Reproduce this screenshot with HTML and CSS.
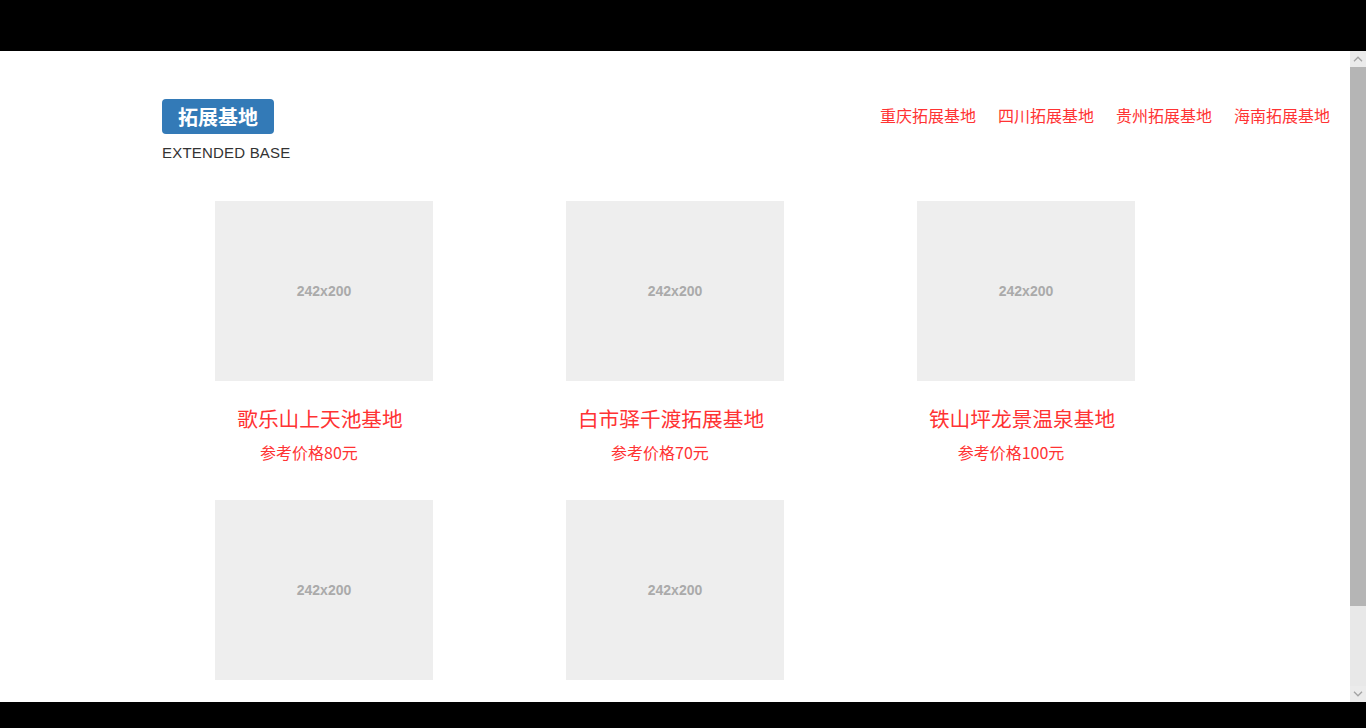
FILE: index.html
```html
<!DOCTYPE html>
<html lang="zh-CN">
<head>
<meta charset="utf-8">
<title>拓展基地</title>
<link rel="stylesheet" href="styles.css">
</head>
<body>
<div class="frame-bar top"></div>
<div class="window">
  <main class="viewport">
    <header class="section-head">
      <div class="brand">
        <span class="badge">拓展基地</span>
        <p class="subtitle">EXTENDED BASE</p>
      </div>
      <nav class="region-nav">
        <a href="#">重庆拓展基地</a>
        <a href="#">四川拓展基地</a>
        <a href="#">贵州拓展基地</a>
        <a href="#">海南拓展基地</a>
      </nav>
    </header>
    <section class="card-grid">
      <article class="card">
        <div class="thumb">242x200</div>
        <h3 class="card-title">歌乐山上天池基地</h3>
        <p class="card-price">参考价格80元</p>
      </article>
      <article class="card">
        <div class="thumb">242x200</div>
        <h3 class="card-title">白市驿千渡拓展基地</h3>
        <p class="card-price">参考价格70元</p>
      </article>
      <article class="card">
        <div class="thumb">242x200</div>
        <h3 class="card-title">铁山坪龙景温泉基地</h3>
        <p class="card-price">参考价格100元</p>
      </article>
      <article class="card">
        <div class="thumb">242x200</div>
      </article>
      <article class="card">
        <div class="thumb">242x200</div>
      </article>
    </section>
  </main>
  <div class="scrollbar" aria-hidden="true">
    <div class="sb-button">
      <svg width="10" height="6" viewBox="0 0 10 6"><path d="M1 5.2 L5 1.2 L9 5.2" fill="none" stroke="#a3a3a3" stroke-width="1.3"/></svg>
    </div>
    <div class="sb-thumb"></div>
    <div class="sb-track"></div>
    <div class="sb-button">
      <svg width="10" height="6" viewBox="0 0 10 6"><path d="M1 0.8 L5 4.8 L9 0.8" fill="none" stroke="#a3a3a3" stroke-width="1.3"/></svg>
    </div>
  </div>
</div>
<div class="frame-bar bottom"></div>
</body>
</html>
```
FILE: styles.css
```css
html, body {
  margin: 0;
  padding: 0;
  height: 728px;
  overflow: hidden;
  background: #000;
}
body {
  display: flex;
  flex-direction: column;
  font-family: "Liberation Sans", "Noto Sans CJK SC", sans-serif;
}
.frame-bar.top { height: 51px; background: #000; flex: none; }
.frame-bar.bottom { height: 26px; background: #000; flex: none; }
.window {
  height: 651px;
  flex: none;
  display: flex;
  background: #fff;
}
.viewport {
  flex: 1;
  min-width: 0;
  overflow: hidden;
}
.scrollbar {
  width: 16px;
  flex: none;
  display: flex;
  flex-direction: column;
  background: #e8e8e8;
}
.sb-button {
  height: 16px;
  flex: none;
  display: flex;
  align-items: center;
  justify-content: center;
  background: #ebebeb;
}
.sb-thumb {
  height: 539px;
  flex: none;
  background: #b5b5b5;
}
.sb-track {
  flex: 1;
  background: #e8e8e8;
}
.section-head {
  display: flex;
  justify-content: space-between;
  align-items: flex-start;
  padding: 48px 20px 0 162px;
}
.brand { display: flex; flex-direction: column; align-items: flex-start; }
.badge {
  display: block;
  height: 35px;
  line-height: 35px;
  padding: 0 16px;
  background: #337ab7;
  color: #fff;
  border-radius: 4px;
  font-family: "Noto Sans CJK SC", sans-serif;
  font-weight: bold;
  font-size: 20px;
}
.subtitle {
  margin: 9px 0 0;
  font-size: 15px;
  letter-spacing: 0.2px;
  line-height: 20px;
  color: #333;
}
.region-nav {
  display: flex;
  gap: 22px;
  margin-top: 5px;
}
.region-nav a {
  font-family: "Noto Sans CJK SC", sans-serif;
  font-size: 16px;
  line-height: 22px;
  color: #f33;
  text-decoration: none;
}
.card-grid {
  display: grid;
  grid-template-columns: repeat(3, 218px);
  column-gap: 133px;
  row-gap: 37px;
  padding: 38px 0 119px 215px;
}
.card { text-align: center; }
.thumb {
  width: 218px;
  height: 180px;
  background: #eee;
  color: #aaa;
  font-weight: bold;
  font-size: 14px;
  display: flex;
  align-items: center;
  justify-content: center;
}
.card-title {
  margin: 22px 0 0;
  padding-right: 8px;
  font-family: "Noto Sans CJK SC", sans-serif;
  font-weight: normal;
  font-size: 20.7px;
  line-height: 30px;
  color: #f33;
  white-space: nowrap;
}
.card-price {
  margin: 8px 0 0;
  padding-right: 30px;
  font-family: "Noto Sans CJK SC", sans-serif;
  font-size: 16px;
  line-height: 22px;
  color: #f33;
}
```
